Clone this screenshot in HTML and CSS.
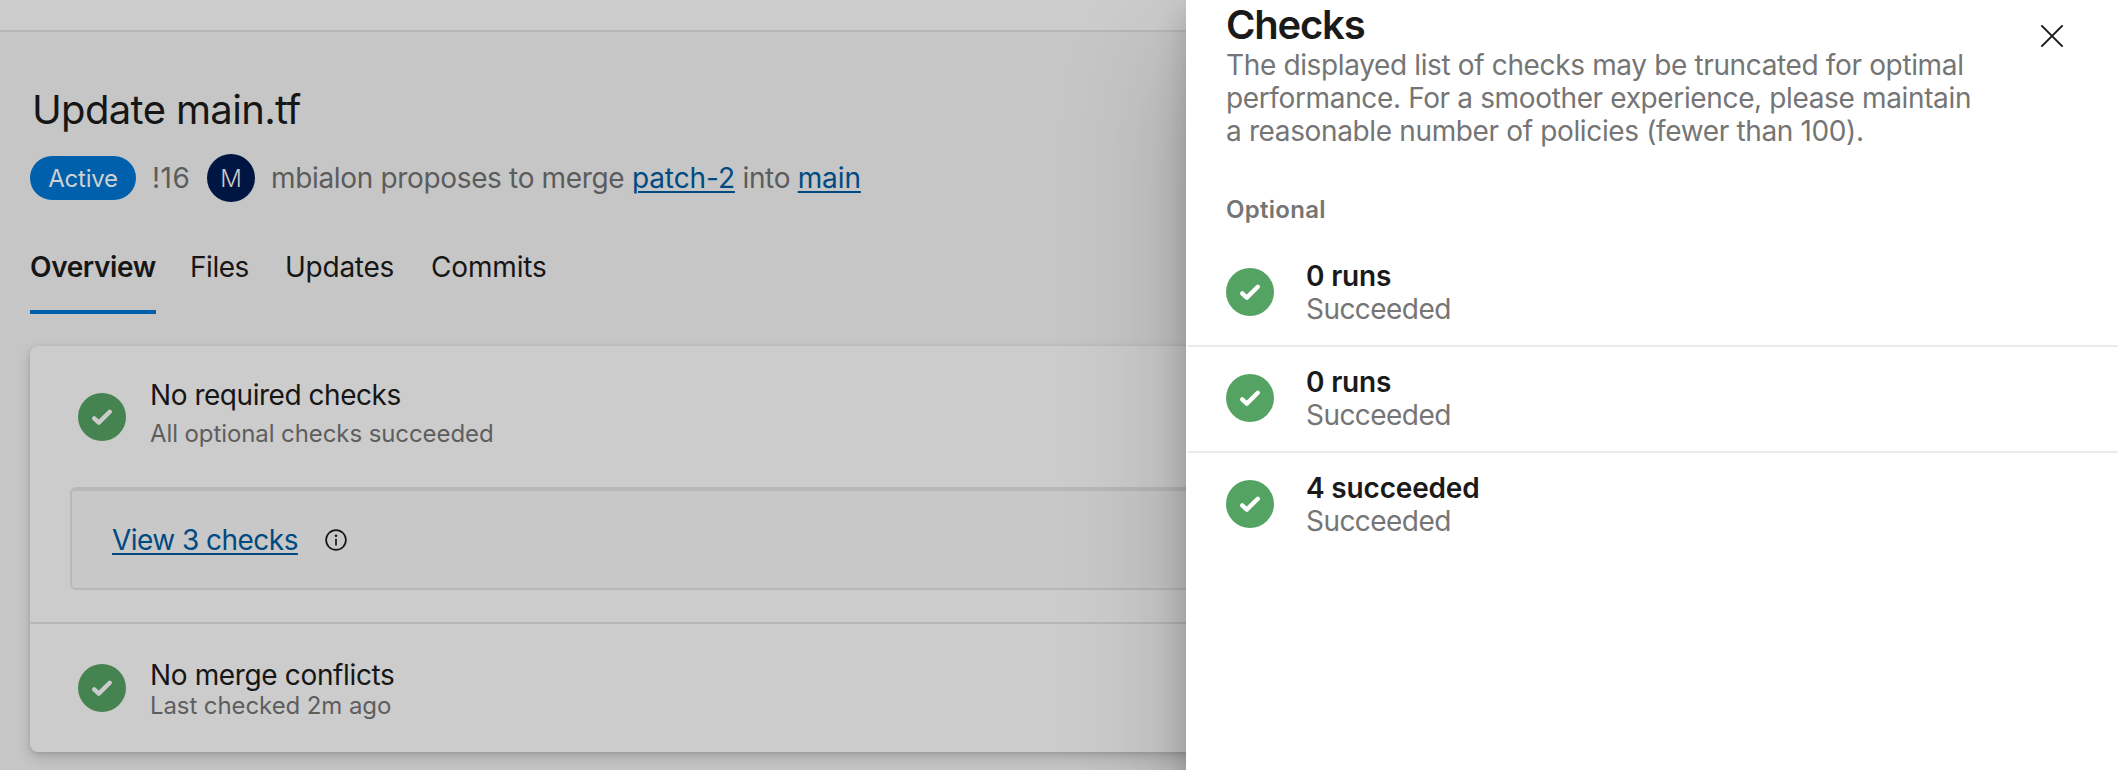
FILE: index.html
```html
<!DOCTYPE html>
<html lang="en">
<head>
<meta charset="utf-8">
<title>Update main.tf</title>
<link rel="stylesheet" href="styles.css">
</head>
<body>
<svg class="defs" aria-hidden="true">
  <symbol id="success" viewBox="0 0 48 48"><circle cx="24" cy="24" r="24" class="disc"/><path d="M16.2 25.4 20.8 29.6 31.8 18.8" class="tick"/></symbol>
</svg>
<main class="page">
  <div class="topbar"></div>
  <header class="header">
    <h1 class="title">Update main.tf</h1>
    <div class="meta">
      <span class="pill">Active</span>
      <span class="number">!16</span>
      <span class="avatar">M</span>
      <span class="proposal">mbialon proposes to merge <a class="link branch" href="#">patch-2</a> into <a class="link branch" href="#">main</a></span>
    </div>
    <nav class="tabs">
      <a class="tab tab-active">Overview</a>
      <a class="tab tab-files">Files</a>
      <a class="tab tab-updates">Updates</a>
      <a class="tab tab-commits">Commits</a>
    </nav>
  </header>
  <section class="card">
    <div class="status status-required">
      <svg class="badge"><use href="#success"/></svg>
      <div>
        <div class="status-title t1">No required checks</div>
        <div class="status-sub s1">All optional checks succeeded</div>
      </div>
    </div>
    <div class="checks-box">
      <a class="link view" href="#">View 3 checks</a>
      <svg class="info" viewBox="0 0 24 24"><circle cx="12" cy="12" r="9.9"/><path d="M12 10.8v6.6"/><circle cx="12" cy="7.7" r="1.3" class="dot"/></svg>
    </div>
    <div class="status status-merge">
      <svg class="badge"><use href="#success"/></svg>
      <div>
        <div class="status-title t2">No merge conflicts</div>
        <div class="status-sub s2">Last checked 2m ago</div>
      </div>
    </div>
  </section>
</main>
<aside class="panel">
  <div class="panel-head">
    <div>
      <h2 class="panel-title">Checks</h2>
      <p class="panel-text">The displayed list of checks may be truncated for optimal<br>performance. For a smoother experience, please maintain<br>a reasonable number of policies (fewer than 100).</p>
    </div>
    <svg class="close" viewBox="0 0 24 24"><path d="M1.4 1.4 22.6 22.6M22.6 1.4 1.4 22.6"/></svg>
  </div>
  <h3 class="group">Optional</h3>
  <ul class="runs">
    <li class="run"><svg class="badge"><use href="#success"/></svg><div class="run-text"><div class="run-title">0 runs</div><div class="run-sub">Succeeded</div></div></li>
    <li class="run"><svg class="badge"><use href="#success"/></svg><div class="run-text"><div class="run-title">0 runs</div><div class="run-sub">Succeeded</div></div></li>
    <li class="run"><svg class="badge"><use href="#success"/></svg><div class="run-text"><div class="run-title">4 succeeded</div><div class="run-sub">Succeeded</div></div></li>
  </ul>
</aside>
</body>
</html>
```
FILE: styles.css
```css
* { box-sizing: border-box; }
body {
  margin: 0;
  height: 770px;
  overflow: hidden;
  position: relative;
  background: #c6c6c6;
  color: #161616;
  font: 28px/33px Inter, "Liberation Sans", sans-serif;
}
.defs { position: absolute; width: 0; height: 0; }
.disc { fill: var(--disc, #458450); }
.tick { fill: none; stroke: var(--tick, #ccc); stroke-width: 4.4; stroke-linecap: round; stroke-linejoin: round; }
.badge { width: 48px; height: 48px; flex: none; }
.topbar { height: 32px; background: #ccc; border-bottom: 2px solid #b8b8b8; }
.header { padding: 54px 30px 0; }
.title { margin: 0; padding-left: 2px; font-size: 40px; line-height: 48px; font-weight: 400; letter-spacing: -.65px; }
.meta { display: flex; align-items: center; height: 48px; margin-top: 20px; color: #5c5c5c; }
.pill { width: 106px; height: 44px; padding-top: 1px; border-radius: 22px; background: #0060ac; color: #d0d0d0; font-size: 24px; line-height: 44px; text-align: center; letter-spacing: -.2px; }
.number { width: 71px; padding-left: 16px; letter-spacing: .5px; }
.avatar { width: 48px; height: 48px; padding-top: 1px; border-radius: 50%; background: #001642; color: #c8c8c8; font-size: 24px; font-weight: 300; line-height: 48px; text-align: center; }
.proposal { margin-left: 16px; white-space: nowrap; letter-spacing: -.34px; }
.link { color: #004a83; text-decoration: underline; text-decoration-thickness: 2px; text-underline-offset: 3px; }
.branch { letter-spacing: -.08px; }
.tabs { display: flex; margin-top: 48px; height: 64px; line-height: 34px; }
.tab { height: 64px; white-space: nowrap; letter-spacing: -.25px; }
.tab-active { width: 126px; font-weight: 600; border-bottom: 4px solid #0060ac; letter-spacing: -.38px; }
.tab-files { margin-left: 34px; width: 59px; letter-spacing: -.45px; }
.tab-updates { margin-left: 36px; width: 109px; }
.tab-commits { margin-left: 37px; letter-spacing: -.15px; }
.card { width: 1300px; height: 406px; margin: 32px 0 0 30px; border-radius: 8px; background: #ccc; box-shadow: 0 6px 14px rgba(0,0,0,.16), 0 1px 4px rgba(0,0,0,.12); }
.status { display: flex; gap: 24px; padding-left: 48px; }
.status-required { height: 141px; padding-top: 47px; }
.status-merge { height: 130px; margin-top: 32px; padding-top: 40px; border-top: 2px solid #b8b8b8; }
.status-title { letter-spacing: -.4px; }
.t1 { margin-top: -14px; letter-spacing: -.46px; }
.s1 { margin-top: 5px; }
.t2 { margin-top: -5px; letter-spacing: -.36px; }
.s2 { margin-top: -3px; }
.status-sub { font-size: 24px; color: #5e5e5e; letter-spacing: -.09px; }
.checks-box { display: flex; align-items: center; height: 103px; margin-left: 40px; padding-left: 40px; border: 2px solid #b8b8b8; border-top-width: 4px; border-radius: 6px; background: #c8c8c8; }
.view { padding-top: 1px; letter-spacing: -.54px; }
.info { width: 24px; height: 24px; margin-left: 26px; fill: none; stroke: #161616; stroke-width: 1.7; }
.dot { fill: #161616; stroke: none; }
.panel { position: absolute; left: 1186px; top: 0; width: 932px; height: 920px; background: #fff; color: #1a1a1a; box-shadow: 0 51px 115px rgba(0,0,0,.22), 0 10px 29px rgba(0,0,0,.18); --disc: #55a362; --tick: #fff; }
.panel-head { display: flex; justify-content: space-between; padding: 0 54px 0 40px; }
.panel-title { margin: 0; font-size: 40px; line-height: 49px; font-weight: 600; letter-spacing: -1.2px; }
.panel-text { margin: 0; color: #757575; white-space: nowrap; letter-spacing: -.36px; }
.close { width: 24px; height: 24px; margin-top: 24px; fill: none; stroke: #1a1a1a; stroke-width: 2; flex: none; }
.group { margin: 45px 0 0 40px; color: #757575; font-size: 24px; font-weight: 600; line-height: 33px; letter-spacing: .28px; }
.runs { list-style: none; margin: 13px 0 0 2px; padding: 0; }
.run { display: flex; align-items: center; gap: 32px; height: 106px; padding-left: 38px; }
.run + .run { box-shadow: inset 0 2px #eaeaea; }
.run-text { padding-top: 2px; }
.run-title { font-weight: 600; letter-spacing: -.18px; }
.run-sub { color: #757575; letter-spacing: -.55px; }
```
